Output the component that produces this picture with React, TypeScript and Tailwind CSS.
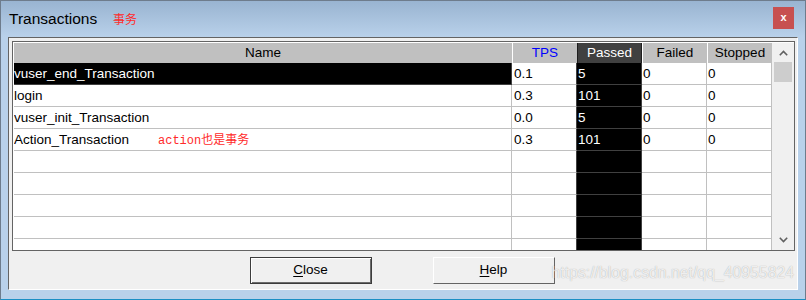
import React from 'react'

const rows = [
  { name: 'vuser_end_Transaction', tps: '0.1', passed: '5', failed: '0', stopped: '0', selected: true },
  { name: 'login', tps: '0.3', passed: '101', failed: '0', stopped: '0' },
  { name: 'vuser_init_Transaction', tps: '0.0', passed: '5', failed: '0', stopped: '0' },
  { name: 'Action_Transaction', tps: '0.3', passed: '101', failed: '0', stopped: '0', note: true },
  {}, {}, {}, {}, {},
] as Array<{ name?: string; tps?: string; passed?: string; failed?: string; stopped?: string; selected?: boolean; note?: boolean }>

const sans = 'font-["Liberation_Sans",Arial,sans-serif]'

export default function App() {
  return (
    <div className={`w-[806px] h-[300px] flex flex-col bg-[#b9d1ea] border border-[#6e7c8c] border-b-[#1c8fc4] overflow-hidden ${sans}`}>
      {/* title bar */}
      <div className="relative h-[36px] shrink-0 flex items-center bg-gradient-to-b from-[#99b4d1] to-[#b9d1ea] pl-[8px] pr-[11px]">
        <span className="text-[15.5px] text-black leading-none">Transactions</span>
        <span className='absolute left-[112px] top-[12px] text-[12px] leading-none text-[#ff2a2a] font-["Noto_Sans_CJK_SC",sans-serif]'>
          事务
        </span>
        <div className="ml-auto mt-[-2px] w-[21px] h-[22px] bg-[#c75050] flex items-center justify-center">
          <span className="text-white text-[11px] font-bold leading-none mb-[2px]">x</span>
        </div>
      </div>

      {/* body */}
      <div className="flex-1 px-[7px] flex flex-col">
        <div className="h-[253px] shrink-0 flex flex-col bg-[#f0f0f0] border-t border-l border-[#646464] border-r border-r-white border-b border-b-white pl-[3px] pt-[3px] pr-[2px]">
          {/* grid */}
          <div className="h-[210px] w-[783px] border border-[#646464] bg-white">
            <div className="h-full border-t border-l border-white flex">
              <div className="w-[758px] flex flex-col overflow-hidden text-[13.5px] leading-none text-black">
                {/* header */}
                <div className="h-[20px] shrink-0 flex bg-[#c0c0c0]">
                  <div className="w-[498px] flex items-center justify-center">Name</div>
                  <div className="w-[65px] flex items-center justify-center border-l border-white text-[#0000ff]">TPS</div>
                  <div className="w-[65px] flex items-center justify-center bg-[#404040] text-white border-x border-[#1e1e1e]">Passed</div>
                  <div className="w-[65px] flex items-center justify-center border-l border-white">Failed</div>
                  <div className="w-[65px] flex items-center justify-center border-l border-white">Stopped</div>
                </div>
                {rows.map((r, i) => (
                  <div key={i} className="h-[22px] shrink-0 flex">
                    <div
                      className={`relative w-[498px] flex items-center border-b border-r ${
                        r.selected ? 'bg-black text-white border-[#404040]' : 'border-[#c0c0c0]'
                      }`}
                    >
                      {r.name}
                      {r.note && (
                        <span className='absolute left-[144px] top-[6px] text-[12px] leading-none text-[#ff2a2a] font-["Liberation_Mono","Noto_Sans_CJK_SC",monospace]'>
                          action也是事务
                        </span>
                      )}
                    </div>
                    <div className="w-[65px] flex items-center pl-[2px] border-b border-b-[#c0c0c0] border-r border-r-[#404040]">{r.tps}</div>
                    <div className="w-[65px] flex items-center pl-[1px] bg-black text-white border-b border-r border-[#404040]">{r.passed}</div>
                    <div className="w-[65px] flex items-center pl-[1px] border-b border-r border-[#c0c0c0]">{r.failed}</div>
                    <div className="w-[65px] flex items-center pl-[1px] border-b border-r border-[#c0c0c0]">{r.stopped}</div>
                  </div>
                ))}
              </div>

              {/* scrollbar */}
              <div className="w-[22px] flex flex-col bg-[#f0f0f0] pl-[1px] pr-[1px]">
                <div className="h-[19px] flex items-center justify-center">
                  <svg width="9" height="6" viewBox="0 0 9 6">
                    <polyline points="0.8,5.2 4.5,1.5 8.2,5.2" fill="none" stroke="#606060" strokeWidth="1.6" />
                  </svg>
                </div>
                <div className="h-[20px] mx-[1px] bg-[#cdcdcd]" />
                <div className="flex-1" />
                <div className="h-[20px] flex items-center justify-center">
                  <svg width="9" height="6" viewBox="0 0 9 6">
                    <polyline points="0.8,0.8 4.5,4.5 8.2,0.8" fill="none" stroke="#606060" strokeWidth="1.6" />
                  </svg>
                </div>
              </div>
            </div>
          </div>

          {/* buttons */}
          <div className="relative flex-1 flex items-center justify-center gap-[61px] pr-[3px] text-[13.5px] text-black">
            <button className="w-[122px] h-[27px] bg-[#f0f0f0] border border-[#3c3c3c] shadow-[inset_1px_1px_0_#ffffff,inset_-1px_-1px_0_#6b6b6b] flex items-center justify-center">
              <span><span className="underline underline-offset-2">C</span>lose</span>
            </button>
            <button className="w-[122px] h-[27px] bg-[#f0f0f0] border border-white border-r-[#646464] border-b-[#646464] flex items-center justify-center">
              <span><span className="underline underline-offset-2">H</span>elp</span>
            </button>
            <span className="absolute right-[1px] top-[14px] text-[15.8px] leading-none text-white/80 [text-shadow:0_0_1px_rgba(0,0,0,0.35)]">
              https://blog.csdn.net/qq_40955824
            </span>
          </div>
        </div>
      </div>
    </div>
  )
}
